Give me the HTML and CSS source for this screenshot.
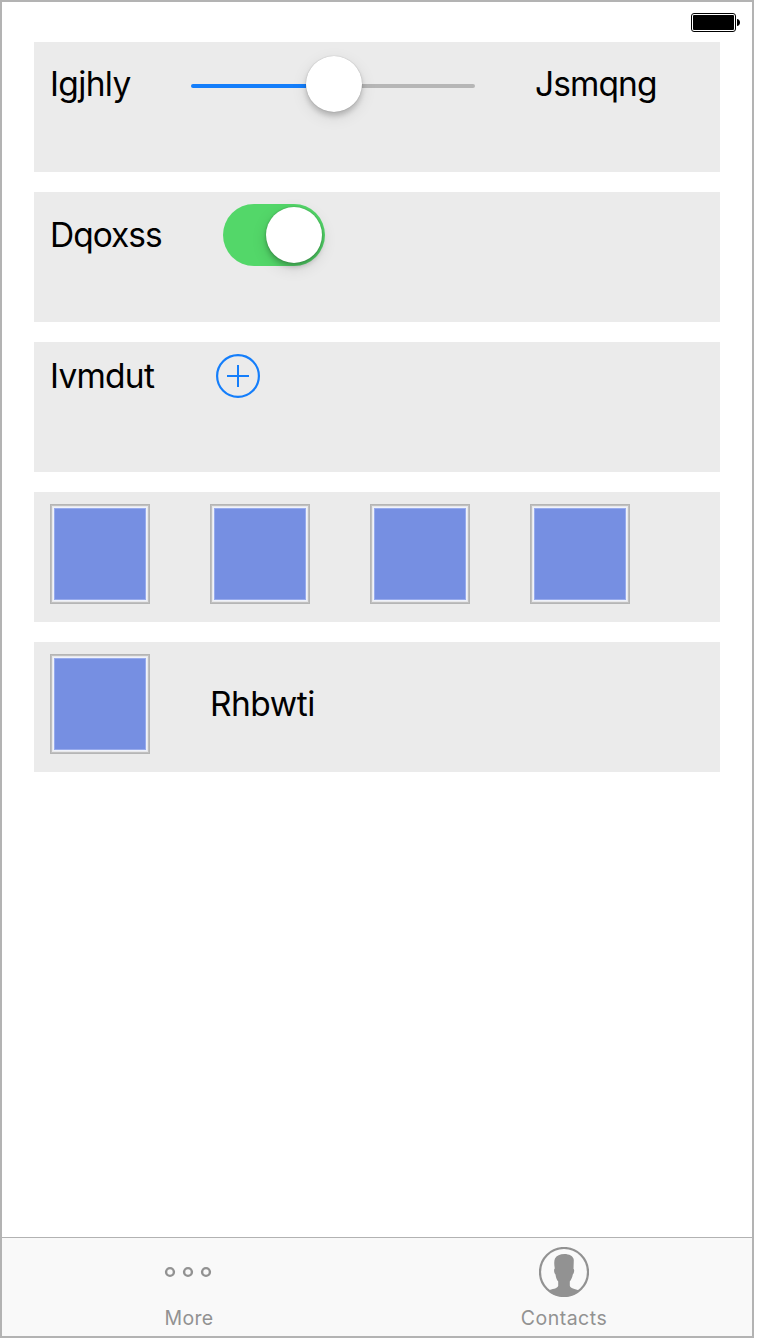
FILE: index.html
```html
<!DOCTYPE html>
<html lang="en">
<head>
<meta charset="utf-8">
<title>Controls</title>
<link rel="stylesheet" href="styles.css">
</head>
<body>
<div class="device">
  <header class="status">
    <svg width="50" height="20" viewBox="0 0 50 20">
      <rect x="1.5" y="1.5" width="44" height="18" rx="2.5" fill="#fff" stroke="#000" stroke-width="1"/>
      <rect x="3" y="3" width="41" height="15" rx="1" fill="#000"/>
      <path d="M47 7c1.500 0 3 1.200 3 3.500s-1.500 3.500-3 3.500z" fill="#000"/>
    </svg>
  </header>
  <main class="rows">
    <section class="row">
      <span class="label label-slider">Igjhly</span>
      <div class="slider"><div class="slider-fill"></div><div class="slider-thumb"></div><div class="slider-rest"></div></div>
      <span class="label label-value">Jsmqng</span>
    </section>
    <section class="row">
      <span class="label label-switch">Dqoxss</span>
      <div class="switch"><div class="switch-thumb"></div></div>
    </section>
    <section class="row">
      <span class="label label-add">Ivmdut</span>
      <svg width="44" height="44" viewBox="0 0 44 44" fill="none" stroke="#147efb" stroke-width="2">
        <circle cx="22" cy="22" r="20.900" stroke-width="2.200"/><path d="M11 22h22M22 11v22"/>
      </svg>
    </section>
    <section class="row">
      <div class="tile"></div><div class="tile"></div><div class="tile"></div><div class="tile"></div>
    </section>
    <section class="row">
      <div class="tile"></div>
      <span class="label label-tile">Rhbwti</span>
    </section>
  </main>
  <nav class="tabs">
    <div class="tab">
      <svg width="50" height="50" viewBox="0 0 50 50" fill="none" stroke="#929292" stroke-width="2.400">
        <circle cx="6" cy="25" r="3.900"/><circle cx="24" cy="25" r="3.900"/><circle cx="42" cy="25" r="3.900"/>
      </svg>
      <span class="tab-label">More</span>
    </div>
    <div class="tab">
      <svg width="50" height="50" viewBox="0 0 50 50">
        <circle cx="25" cy="25" r="24" fill="none" stroke="#929292" stroke-width="2.200"/>
        <path d="M25.500 7C30 7 34.500 9 34.800 13L34.500 22C35.600 22 35.300 26 33.800 27.500C33.300 30.500 32 33 30.800 34.500V38.500C31 41.500 36 42 40.500 43.500Q34 50 25 50Q16 50 9 43.500C13 42 18.500 41.500 19.200 39V34.500C17.800 33 16.800 30 16.500 27.500C15 26.500 14.600 22 15.800 21.500C15 17 15 14 16 11.500C17.500 8.500 21 7 25.500 7Z" fill="#929292"/>
      </svg>
      <span class="tab-label tab-contacts">Contacts</span>
    </div>
  </nav>
</div>
</body>
</html>
```
FILE: styles.css
```css
* { box-sizing: border-box; }
body { margin: 0; background: #fff; font-family: Inter, "Liberation Sans", sans-serif; color: #000; }
svg { display: block; flex: none; }
.device { display: flex; flex-direction: column; width: 754px; height: 1338px; border: 2px solid #b3b3b3; }
.status { display: flex; justify-content: flex-end; height: 40px; padding: 10px 12px 0 0; }
.rows { display: flex; flex-direction: column; flex: 1; gap: 20px; padding: 0 32px; }
.row { display: flex; align-items: center; align-content: flex-start; flex-wrap: wrap; gap: 60px; height: 130px; padding: 12px 16px; background: #ebebeb; }
.label { font-size: 33.5px; line-height: 40px; white-space: nowrap; }
.label-slider { width: 81px; letter-spacing: -0.65px; }
.label-value { letter-spacing: -0.9px; }
.label-switch { width: 113px; letter-spacing: -1px; }
.label-add { width: 106px; letter-spacing: -0.75px; }
.label-tile { letter-spacing: -0.5px; }
.slider { display: flex; align-items: center; width: 284px; height: 60px; }
.slider-fill { width: 115px; height: 4px; margin-top: 4px; border-radius: 2px 0 0 2px; background: #147efb; }
.slider-rest { flex: 1; height: 4px; margin-top: 4px; border-radius: 0 2px 2px 0; background: #b6b6b6; }
.slider-thumb { z-index: 1; width: 56px; height: 56px; border-radius: 50%; background: #fff; box-shadow: 0 0 1px rgba(0,0,0,.3), 0 4px 5px rgba(0,0,0,.18), 0 5px 16px rgba(0,0,0,.1); }
.switch { display: flex; justify-content: flex-end; width: 102px; height: 62px; padding: 3px; border-radius: 31px; background: #53d769; }
.switch-thumb { width: 56px; height: 56px; border-radius: 50%; background: #fff; box-shadow: 0 0 2px rgba(0,0,0,.25), 0 4px 5px rgba(0,0,0,.2), 0 5px 16px rgba(0,0,0,.12); }
.tile { width: 100px; height: 100px; padding: 3px; border: 1px solid #b5b5b5; background: #768fe2 content-box; box-shadow: inset 0 0 0 1px #c0c0c0, inset 0 0 0 2px #e8e8ea, inset 0 0 0 3px #eff2fb, inset 0 0 0 4px #97aaec; }
.tabs { display: flex; height: 99px; padding-top: 9px; border-top: 1px solid #b2b2b2; background: #f9f9f9; }
.tab { display: flex; flex: 1; flex-direction: column; align-items: center; gap: 9px; padding-right: 1px; }
.tab-label { font-size: 19.5px; line-height: 24px; letter-spacing: 0.3px; color: #929292; }
.tab-contacts { letter-spacing: 0.5px; }
```
